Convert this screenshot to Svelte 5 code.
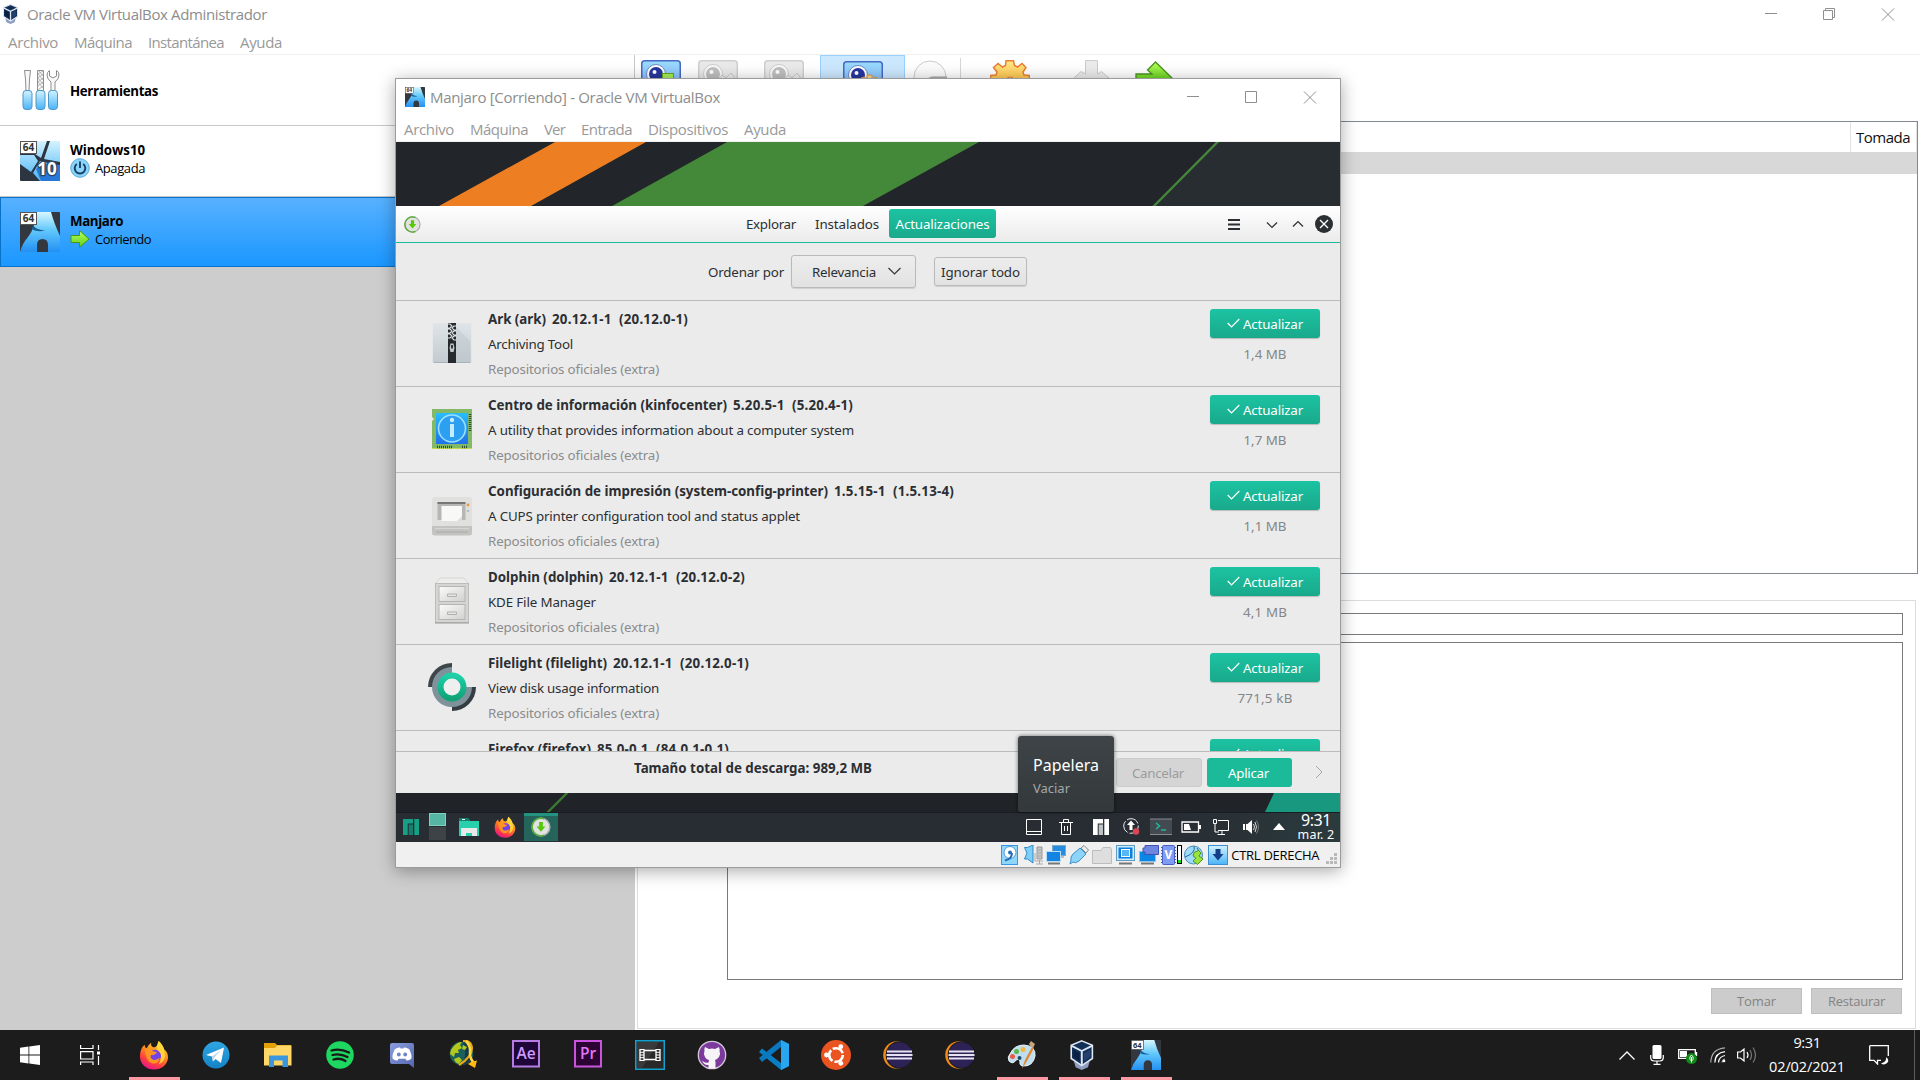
<script>
  // Spreads the letters of a label so that it takes the given width.
  function fit(node, width) {
    const natural = node.getBoundingClientRect().width;
    node.style.letterSpacing = `${(width - natural) / node.textContent.length}px`;
  }

  const mainMenu = [['Archivo', 50, 16], ['Máquina', 58, 16], ['Instantánea', 76, 16], ['Ayuda', 42, 0]];
  const vmMenu = [['Archivo', 50, 16], ['Máquina', 58, 16], ['Ver', 21, 16], ['Entrada', 51, 16], ['Dispositivos', 80, 16], ['Ayuda', 42, 0]];

  const packages = [
    { icon: 'ark', name: 'Ark (ark)', nw: 58, version: '20.12.1-1  (20.12.0-1)', vw: 136, desc: 'Archiving Tool', dw: 85, size: '1,4 MB', sw: 43 },
    { icon: 'info', name: 'Centro de información (kinfocenter)', nw: 239, version: '5.20.5-1  (5.20.4-1)', vw: 120, desc: 'A utility that provides information about a computer system', dw: 366, size: '1,7 MB', sw: 43 },
    { icon: 'printer', name: 'Configuración de impresión (system-config-printer)', nw: 340, version: '1.5.15-1  (1.5.13-4)', vw: 120, desc: 'A CUPS printer configuration tool and status applet', dw: 312, size: '1,1 MB', sw: 43 },
    { icon: 'cabinet', name: 'Dolphin (dolphin)', nw: 115, version: '20.12.1-1  (20.12.0-2)', vw: 136, desc: 'KDE File Manager', dw: 108, size: '4,1 MB', sw: 44 },
    { icon: 'filelight', name: 'Filelight (filelight)', nw: 119, version: '20.12.1-1  (20.12.0-1)', vw: 136, desc: 'View disk usage information', dw: 171, size: '771,5 kB', sw: 55 },
    { icon: 'firefox', name: 'Firefox (firefox)', nw: 103, version: '85.0-0.1  (84.0.1-0.1)', vw: 132, desc: '', dw: 0, size: '', sw: 0 }
  ];

  const apps = [
    { id: 'firefox', open: true }, { id: 'telegram' }, { id: 'explorer' }, { id: 'spotify' }, { id: 'discord' },
    { id: 'jdownloader' }, { id: 'ae' }, { id: 'pr' }, { id: 'movie' }, { id: 'github' }, { id: 'vscode' },
    { id: 'ubuntu' }, { id: 'eclipse' }, { id: 'eclipse' }, { id: 'paint', open: true }, { id: 'vbox', open: true }, { id: 'arch', open: true }
  ];
</script>

{#snippet archIcon(size)}
  <svg width={size} height={size} viewBox="0 0 40 40">
    <rect width="40" height="40" rx="1" fill="#33373f" />
    <path d="M17 0H31Q34 11 40 24V40H28V33Q28 27 22.500 27Q17 27 17 33V40H0Q2 32 8 25Q12 20 14 13Z" fill="url(#blueA)" />
    <path d="M13 13.500Q17 18 25 18.500Q18 20.500 12 17.500Z" fill="#1b5f96" />
    <rect x="0.500" y="0.500" width="16" height="12" fill="#fff" stroke="#555" />
    <text x="8.500" y="10.300" text-anchor="middle" font-size="10" font-weight="700" fill="#333">64</text>
  </svg>
{/snippet}

{#snippet vboxIcon(size)}
  <svg width={size} height={size} viewBox="2.500 0 34 34">
    <path d="M8 24L17 29L26 24L24 31L17 34L10 31Z" fill="#8c9dbd" />
    <path d="M17 1L29 6V21L17 29L5 21V6Z" fill="#123057" stroke="#dde6f2" stroke-width="1.800" />
    <path d="M5 6.500L17 12.500L29 6.500M17 13V29" stroke="#dde6f2" stroke-width="2.200" fill="none" />
    <path d="M7.500 11L14.500 15V24L7.500 19Z" fill="#0b1f42" />
    <path d="M26.500 11L19.500 15V24L26.500 19Z" fill="#23416f" />
  </svg>
{/snippet}

{#snippet firefoxIcon(size)}
  <svg width={size} height={size} viewBox="0 0 32 32">
    <path d="M21 1C24 4 26 7 27 10Q31 13 31 19C30 27 24 31.500 16 31.500C8 31.500 1 26 1 17Q1 9 6 5Q6 8 8 9Q10 5 13 3Q12 7 16 8Q20 7 21 1Z" fill="url(#fire)" />
    <path d="M21 1C24 4 27 8 27 12Q30 22 21 26Q26 18 20 11Q18 6 21 1Z" fill="#ffdc3e" opacity="0.850" />
    <circle cx="17" cy="17" r="6.500" fill="#7542e5" />
    <path d="M6 9Q11 8 15 12L19 13Q18 16 13 16Q11 19 15 21Q19 22 22 19Q21 26 14 25Q7 23 6 9Z" fill="#ff9520" />
  </svg>
{/snippet}

{#snippet pamacIcon(size)}
  <svg width={size} height={size} viewBox="0 0 18 18">
    <circle cx="9" cy="9" r="8" fill="#e2e3e1" stroke="#aaaeaa" stroke-width="1.300" />
    <path d="M12 1.600A8 8 0 1 0 12 16.400" fill="none" stroke="#59ad3a" stroke-width="1.500" />
    <path d="M7.300 4.500H10.700V8.500H13L9 13.200L5 8.500H7.300Z" fill="#55c80b" />
  </svg>
{/snippet}

{#snippet manjaroMark(color, shade)}
  <svg width="16" height="16" viewBox="0 0 16 16">
    <path d="M0 0H10V4.500H4.700V16H0Z" fill={color} />
    <path d="M5.700 5.500H10V16H5.700Z" fill={shade} />
    <path d="M11.300 0H16V16H11.300Z" fill={color} />
  </svg>
{/snippet}

{#snippet camera(kind)}
  <svg width="40" height="20" viewBox="0 0 40 20">
    <rect x="0.750" y="0.750" width="38.500" height="32" rx="3" fill={kind === 'gray' ? '#eaeaea' : 'url(#cam)'} stroke={kind === 'gray' ? '#cfcfcf' : '#4868c6'} stroke-width="1.500" />
    <circle cx="15" cy="14" r="9.500" fill={kind === 'gray' ? '#fafafa' : '#fff'} stroke={kind === 'gray' ? '#ccc' : '#6e8bc9'} />
    <circle cx="15" cy="14" r="7" fill={kind === 'gray' ? '#c0c0c0' : '#26369e'} />
    <circle cx="13.500" cy="12" r="2" fill="#fff" />
    {#if kind === 'new'}<rect x="21.500" y="13.500" width="11" height="8" fill="#a4ee57" stroke="#65a91c" />{/if}
    {#if kind === 'gear'}<path d="M18 20V17L21 16L24 18V14H29V18L33 16L35 18V20Z" fill="#ffd783" stroke="#d99549" />{/if}
    {#if kind === 'gray'}<path d="M20 20L24 15L28 18L33 13L38 20Z" fill="#eee" stroke="#c9c9c9" />{/if}
  </svg>
{/snippet}

{#snippet check()}
  <svg class="check" width="13" height="11" viewBox="0 0 13 11"><path d="M0.700 5L4.500 9L12.300 1" fill="none" stroke="#fff" stroke-width="1.200" /></svg>
{/snippet}

{#snippet packageIcon(id)}
  <svg width="48" height="48" viewBox="0 0 48 48">
    {#if id === 'ark'}
      <rect x="8" y="4" width="32" height="40" transform="translate(-4.800 0) scale(1.200 1)" fill="url(#steel)" />
      <path d="M28 8L42 22V44H28Z" fill="#bac2c7" opacity="0.400" />
      <path d="M6 43.500H42" stroke="#a8b2b8" />
      <rect x="20" y="4" width="8" height="40" fill="#262a2d" />
      <path d="M20 5H22L24 7L22 9H20M28 7H26L24 9L26 11H28M20 10H22L24 12L22 14H20M28 12H26L24 14L26 16H28M20 15H22L24 17L22 19H20M28 17H26L24 19L26 21H28" stroke="#dfe3e5" stroke-width="1.100" fill="none" />
      <path d="M22.500 24.500H25.500L26.500 29L25.500 33H22.500L21.500 29Z" fill="#c4c9cc" /><rect x="23" y="26" width="2" height="3.500" fill="#33383b" />
    {:else if id === 'info'}
      <path d="M4 4H44V44H4V16L6 14L4 12Z" fill="#82b866" />
      <path d="M4 43.500H44" stroke="#c4d94b" />
      <rect x="8" y="8" width="32" height="31" fill="url(#infoBlue)" />
      <circle cx="24" cy="23.500" r="13.500" fill="#2d9ff1" stroke="#9de0ff" stroke-width="1.600" />
      <path d="M24 19V32" stroke="#c6ecff" stroke-width="4" /><circle cx="24" cy="15" r="2.200" fill="#c6ecff" />
      <path d="M42 9V26M9 42H25M34 42H40" stroke="#30512f" stroke-width="2.500" stroke-dasharray="1 1" />
    {:else if id === 'printer'}
      <rect x="4" y="6" width="40" height="38" rx="3" fill="#e0e0de" />
      <path d="M4 35H44V42Q44 44.500 41 44.500H7Q4 44.500 4 42Z" fill="#c3c3c1" />
      <path d="M8 41H40" stroke="#a8a8a6" /><path d="M7 37.500H41" stroke="#d6d6d4" />
      <path d="M9.500 11H37.500V29H9.500Z" fill="#b6b6b4" />
      <path d="M9.500 12H37.500" stroke="#777" stroke-width="2" />
      <path d="M13.500 15H34V30H13.500Z" fill="#f8f8f7" />
      <path d="M34 25V30H29Z" fill="#dedede" />
      <circle cx="40" cy="14" r="1.400" fill="#f1923c" /><circle cx="40" cy="20" r="1.300" fill="#bbb" />
    {:else if id === 'cabinet'}
      <path d="M12 1H36L41 7H7Z" fill="#ededec" stroke="#d6d6d4" />
      <rect x="7.500" y="6.500" width="33" height="39" fill="#d5d5d3" stroke="#bcbcba" />
      <rect x="11" y="9.500" width="26" height="15" fill="url(#drawer)" stroke="#b5b5b3" />
      <rect x="11" y="27.500" width="26" height="15" fill="url(#drawer)" stroke="#b5b5b3" />
      <path d="M19.500 19.500V17H28.500V19.500ZM19.500 37.500V35H28.500V37.500Z" fill="#e6e6e6" stroke="#b0b0b0" />
      <path d="M7 46H41" stroke="#999" />
    {:else if id === 'filelight'}
      <path d="M24 0V24H0A24 24 0 0 1 24 0Z" fill="#3e464b" />
      <path d="M24 48V24H48A24 24 0 0 1 24 48Z" fill="#353d42" />
      <path d="M24 4A20 20 0 1 0 44 24H24Z" fill="#7f919a" />
      <circle cx="24" cy="24" r="11.500" fill="#efefef" stroke="url(#ring)" stroke-width="6" />
    {/if}
  </svg>
{/snippet}

{#snippet appIcon(id)}
  {#if id === 'firefox'}
    {@render firefoxIcon(30)}
  {:else if id === 'vbox'}
    {@render vboxIcon(30)}
  {:else if id === 'arch'}
    {@render archIcon(30)}
  {:else}
    <svg width="30" height="30" viewBox="0 0 30 30">
      {#if id === 'telegram'}
        <circle cx="15" cy="15" r="13.500" fill="url(#tele)" />
        <path d="M5 15L23 7.500L20 23L14.500 19L12 21.500L11 16.500Z" fill="#fff" /><path d="M11 16.500L20 10L13 18L12 21.500Z" fill="#bdd9e8" />
      {:else if id === 'explorer'}
        <path d="M1 3H12L14 5H28V25H1Z" fill="#e3a008" /><path d="M1 8H12L14 5.500H28.500V25.500H1Z" fill="#ffd668" />
        <path d="M6 15.500H25V27H19.500V20.500H11V27H6Z" fill="#3b97dd" />
      {:else if id === 'spotify'}
        <circle cx="15" cy="15" r="13.800" fill="#1ed760" />
        <path d="M6.500 10.500Q15 8 24 12.500M7.500 15Q15 13 22.500 17M8.500 19.500Q15 17.500 20.500 21" fill="none" stroke="#191919" stroke-width="2.300" stroke-linecap="round" />
      {:else if id === 'discord'}
        <path d="M5 3H25Q27 3 27 5V28L22 24H5Q3 24 3 22V5Q3 3 5 3Z" fill="url(#disc)" />
        <path d="M8 9Q11 7 13 7.500L13.500 8.500H16.500L17 7.500Q19 7 22 9Q25 14 24.500 18.500Q22 21 19.500 20.500L18.500 18.700H11.500L10.500 20.500Q8 21 5.500 18.500Q5 14 8 9Z" fill="#fff" />
        <circle cx="11.800" cy="14.500" r="1.900" fill="#6f82c9" /><circle cx="18.200" cy="14.500" r="1.900" fill="#6f82c9" />
      {:else if id === 'jdownloader'}
        <circle cx="12.500" cy="13.500" r="11.800" fill="#1d5f5c" />
        <path d="M14 3A11 11 0 0 1 10 25Q20 18 14 3Z" fill="#123a4a" />
        <path d="M4 7Q8 2 13 2L11 5L13 8L9 10L10 13L6 13L5 17L1 14Q1 10 4 7ZM14 5L18 7L16 10L13 9ZM5 19L10 17L13 20L10 24Q6 23 5 19Z" fill="#b2c81b" />
        <path d="M14 1Q22 0 23 8Q23 17 10 25" fill="none" stroke="#e8a818" stroke-width="2.200" />
        <path d="M17 1Q22 6 21 13Q21 19 25 23" fill="none" stroke="#ffd63c" stroke-width="2.600" />
        <path d="M19 24L22 22L28 20.500L26 28Z" fill="#ffba12" />
      {:else if id === 'ae' || id === 'pr'}
        <rect x="2" y="1" width="26" height="25.500" fill={id === 'ae' ? '#1e0639' : '#2b0434'} stroke={id === 'ae' ? '#b57ce4' : '#cb54df'} stroke-width="2" />
        <text class="adobe" x="15" y="19" text-anchor="middle" font-size="15.500" fill={id === 'ae' ? '#cf9bff' : '#e477f5'}>{id === 'ae' ? 'Ae' : 'Pr'}</text>
      {:else if id === 'movie'}
        <rect x="0.750" y="0.750" width="28.500" height="28.500" fill="#292929" stroke="#11a1cf" stroke-width="1.500" />
        <path d="M2 2H24L7 28H2Z" fill="#444" opacity="0.650" />
        <path d="M5 9V21M9 9V21M21 9V21M25 9V21M9 10.500H21M9 19.500H21" fill="none" stroke="#fff" stroke-width="1.300" />
        <path d="M5 9.500H9M5 12.300H9M5 15H9M5 17.700H9M5 20.500H9M21 9.500H25M21 12.300H25M21 15H25M21 17.700H25M21 20.500H25" stroke="#fff" />
      {:else if id === 'github'}
        <circle cx="15" cy="15" r="13.700" fill="#7b3a9c" stroke="#d3c8da" stroke-width="1.300" />
        <path d="M8 7L12 9Q15 8 18 9L22 7Q23 10 22.500 11Q24 14 22 17Q20 19.500 18 20L18.500 22V28.500H11.500V25Q7 25.500 5 20.500Q8 23.500 11.500 22.500L12 20Q9 19.500 8 17Q6 14 7.500 11Q7 9 8 7Z" fill="#f7f4f8" />
      {:else if id === 'vscode'}
        <path d="M22 0L30 4V26L22 30L0 12L3 8.500L22 23Z" fill="#087fc4" /><path d="M22 0V7L3 22L0 18Z" fill="#0a77bf" />
        <path d="M22 0L30 4V26L22 30Z" fill="#2aa5ef" />
      {:else if id === 'ubuntu'}
        <circle cx="15" cy="15" r="15" fill="#e95420" /><circle cx="15" cy="15" r="6.800" fill="none" stroke="#fff" stroke-width="2.600" stroke-dasharray="12.200 2.040" />
        <circle cx="5.500" cy="15" r="2.400" fill="#fff" /><circle cx="19.800" cy="6.700" r="2.400" fill="#fff" /><circle cx="19.800" cy="23.300" r="2.400" fill="#fff" />
      {:else if id === 'eclipse'}
        <circle cx="14" cy="15" r="13.800" fill="#ee8b18" /><circle cx="16.500" cy="15" r="13.800" fill="#1b1b1b" /><circle cx="16.500" cy="15" r="12.800" fill="#2c2255" />
        <path d="M4 11.500H29M3.500 15H29.500M4 18.500H29" stroke="#e6e2f1" stroke-width="2" />
      {:else if id === 'paint'}
        <path d="M3 14Q7 5 17 5Q29 6 28 16Q26 27 15 26Q12 25 13 21Q12 18 9 20Q6 25 2 21Q0 17 3 14Z" fill="#bfdff0" stroke="#e8f5fb" />
        <circle cx="5.500" cy="16.500" r="2.500" fill="#e85b47" /><circle cx="9.500" cy="11.500" r="2.500" fill="#59b74b" /><circle cx="16" cy="9.500" r="2.500" fill="#f4b93c" /><circle cx="12.500" cy="18" r="2" fill="#204a64" />
        <path d="M15 29L18 20L25 7L27 8L20 21Z" fill="#e1872c" /><path d="M22 4L24 1L28 4L26 8L24 7Z" fill="#c6a77c" />
      {/if}
    </svg>
  {/if}
{/snippet}

<svg class="defs" width="0" height="0">
  <defs>
    <linearGradient id="blueA" x1="0" y1="0" x2="0" y2="1"><stop offset="0" stop-color="#d8f7ff" /><stop offset="0.450" stop-color="#62c8fb" /><stop offset="1" stop-color="#2390f2" /></linearGradient>
    <linearGradient id="fire" x1="0.800" y1="0" x2="0.300" y2="1"><stop offset="0" stop-color="#ffe33c" /><stop offset="0.450" stop-color="#ff8a1c" /><stop offset="0.750" stop-color="#ff3b45" /><stop offset="1" stop-color="#e5158c" /></linearGradient>
    <linearGradient id="cam" x1="0" y1="0" x2="0" y2="1"><stop offset="0" stop-color="#9bdcff" /><stop offset="1" stop-color="#7cabf5" /></linearGradient>
    <linearGradient id="steel" x1="0" y1="0" x2="0" y2="1"><stop offset="0" stop-color="#dfe5e8" /><stop offset="1" stop-color="#c3cbd0" /></linearGradient>
    <linearGradient id="infoBlue" x1="0" y1="0" x2="0" y2="1"><stop offset="0" stop-color="#29bdfb" /><stop offset="1" stop-color="#1f71e8" /></linearGradient>
    <linearGradient id="drawer" x1="0" y1="0" x2="1" y2="1"><stop offset="0" stop-color="#fbfbfb" /><stop offset="1" stop-color="#d0d0ce" /></linearGradient>
    <linearGradient id="ring" x1="0" y1="0" x2="0" y2="1"><stop offset="0" stop-color="#1ecfa8" /><stop offset="1" stop-color="#10a377" /></linearGradient>
    <linearGradient id="tele" x1="0" y1="0" x2="0" y2="1"><stop offset="0" stop-color="#2fa6e2" /><stop offset="1" stop-color="#1483c5" /></linearGradient>
    <linearGradient id="disc" x1="0" y1="0" x2="1" y2="1"><stop offset="0" stop-color="#8a9ddd" /><stop offset="1" stop-color="#5467ae" /></linearGradient>
    <linearGradient id="sky" x1="0" y1="0" x2="0" y2="1"><stop offset="0" stop-color="#d3f3ff" /><stop offset="1" stop-color="#4ab4f8" /></linearGradient>
    <linearGradient id="lime" x1="0" y1="0" x2="0" y2="1"><stop offset="0" stop-color="#b5ff5c" /><stop offset="1" stop-color="#5fce17" /></linearGradient>
    <linearGradient id="gold" x1="0" y1="0" x2="0" y2="1"><stop offset="0" stop-color="#ffe88a" /><stop offset="1" stop-color="#ffc34a" /></linearGradient>
  </defs>
</svg>

<div class="screen">
  <main class="manager">
    <header class="title main-title">
      <span class="title-icon">{@render vboxIcon(20)}</span>
      <span class="ui" use:fit={240}>Oracle VM VirtualBox Administrador</span>
      <svg class="controls" width="130" height="14" viewBox="0 0 130 14" fill="none" stroke="#8f8f8f">
        <path d="M0 6.500H12M58.500 3.500H67.500V12.500H58.500ZM60.500 3.500V1.500H69.500V10.500H67.500M117 1.500L129 13.500M129 1.500L117 13.500" />
      </svg>
    </header>
    <nav class="menu main-menu">
      {#each mainMenu as [label, width, gap]}
        <span class="ui" style:margin-right="{gap}px" use:fit={width}>{label}</span>
      {/each}
    </nav>

    <div class="body">
      <aside class="sidebar">
        <div class="machine tools">
          <svg width="40" height="40" viewBox="-1 0 40 40" fill="#f8f8f8" stroke="#8d8d8d">
            <path d="M3.500 0.500H9.500L8.500 9L8 21H5L4.500 9ZM16.500 0.500H22.500V21H16.500ZM30 21V12Q26 9 26 5Q26 2 28.500 0.500V6L32 8L35.500 6V0.500Q38 2 38 5Q38 9 34 12V21Z" />
            <path d="M17 4L22 1M17 8L22 4M17 12L22 8M17 16L22 12M17 20L22 16M18 1L22 6M17 4L22 10M17 8L22 14M17 12L22 18" stroke="#b5b5b5" />
            <g fill="url(#sky)" stroke="#4f96c8"><rect x="2" y="20.500" width="9" height="19" rx="3" /><rect x="15" y="20.500" width="9" height="19" rx="3" /><rect x="27.500" y="20.500" width="9" height="19" rx="3" /></g>
          </svg>
          <b class="ui" use:fit={88}>Herramientas</b>
        </div>
        <div class="machine">
          <svg width="40" height="40" viewBox="0 0 40 40">
            <rect width="40" height="40" rx="1" fill="#2d3540" />
            <path d="M17 0H27L21 17L15 13H17ZM30 0H40V21L24 18ZM0 14H14L18 20L11 31L0 23ZM20 20L40 25V40H20L13 32Z" fill="url(#sky)" />
            <path d="M16 28L22 22L40 24V40H21Z" fill="#2878d8" />
            <rect x="0.500" y="0.500" width="16" height="12" fill="#fff" stroke="#555" />
            <text x="8.500" y="10.300" text-anchor="middle" font-size="10" font-weight="700" fill="#333">64</text>
            <text class="ten" x="27" y="34" text-anchor="middle" font-size="17" font-weight="700">10</text>
          </svg>
          <div class="labels">
            <b class="ui" use:fit={75}>Windows10</b>
            <div class="state">
              <svg width="20" height="20" viewBox="0 0 20 20"><circle cx="10" cy="10" r="9.300" fill="#8ad4fa" stroke="#5aabdb" /><path d="M6.800 6A5.300 5.300 0 1 0 13.200 6M10 3.500V10" stroke="#173f66" stroke-width="1.900" fill="none" /></svg>
              <span class="ui" use:fit={50}>Apagada</span>
            </div>
          </div>
        </div>
        <div class="machine selected">
          {@render archIcon(40)}
          <div class="labels">
            <b class="ui" use:fit={53}>Manjaro</b>
            <div class="state">
              <svg width="20" height="20" viewBox="0 0 20 20"><path d="M1 6.500H9.500V1.500L19 10L9.500 18.500V13.500H1Z" fill="url(#lime)" stroke="#4c9614" /></svg>
              <span class="ui" use:fit={56}>Corriendo</span>
            </div>
          </div>
        </div>
      </aside>

      <section class="content">
        <div class="toolbar">
          <span class="tool t1">{@render camera('new')}</span>
          <span class="tool t2">{@render camera('gray')}</span>
          <span class="tool t3">{@render camera('gray')}</span>
          <span class="tool chosen">{@render camera('gear')}</span>
          <svg class="tool t5" width="36" height="20" viewBox="0 0 36 20"><circle cx="17" cy="17" r="16" fill="#fbfbfb" stroke="#ccc" /><path d="M15 18L19 16.500H34V20H15Z" fill="#aaa" /></svg>
          <i class="bar"></i>
          <svg class="tool t6" width="40" height="20" viewBox="0 0 40 20"><path d="M0.500 20V15.500L6 15L7 12L3.500 7.500L8 3.500L12.500 7L15.500 5.500L16 0.700H23.500L24.500 5.500L27.500 7L32 3.500L36 7.500L33 12L34 15L39.500 15.500V20Z" fill="url(#gold)" stroke="#e87f33" stroke-width="1.500" /><circle cx="20" cy="21" r="4" fill="#fff" stroke="#d87937" /></svg>
          <svg class="tool t7" width="38" height="20" viewBox="0 0 38 20"><path d="M12.500 0.500H24.500V14L28.500 11.500L36 18V20H1V18L8 11.500L12.500 14Z" fill="#ebebeb" stroke="#ccc" /></svg>
          <svg class="tool t8" width="40" height="20" viewBox="0 0 40 20"><path d="M1 20V13H17L12.500 9L20.500 1L40 20Z" fill="url(#lime)" stroke="#4b9321" stroke-width="1.300" /></svg>
        </div>
        <div class="table">
          <div class="thead"><div class="column"><span class="ui" use:fit={54}>Tomada</span></div></div>
          <div class="trow"></div>
        </div>
        <div class="details">
          <div class="input"></div>
          <div class="area"></div>
          <div class="actions">
            <button><span class="ui" use:fit={39}>Tomar</span></button>
            <button><span class="ui" use:fit={57}>Restaurar</span></button>
          </div>
        </div>
      </section>
    </div>
  </main>

  <section class="vm">
    <header class="title vm-title">
      <span class="title-icon">{@render archIcon(20)}</span>
      <span class="ui" use:fit={290}>Manjaro [Corriendo] - Oracle VM VirtualBox</span>
      <svg class="controls" width="130" height="14" viewBox="0 0 130 14" fill="none" stroke="#8f8f8f"><path d="M0 6.500H12M58.500 1.500H69.500V12.500H58.500ZM117 1.500L129 13.500M129 1.500L117 13.500" /></svg>
    </header>
    <nav class="menu vm-menu">
      {#each vmMenu as [label, width, gap]}
        <span class="ui" style:margin-right="{gap}px" use:fit={width}>{label}</span>
      {/each}
    </nav>

    <svg class="wall" width="944" height="64" viewBox="0 0 944 64">
      <rect width="944" height="64" fill="#222529" />
      <path d="M159 0H250L135 64H43Z" fill="#ee7e22" />
      <path d="M331 0H583L467 64H216Z" fill="#44883a" />
      <path d="M822 0H944V64H758Z" fill="#282d31" />
      <path d="M822.500 -1L757 65" stroke="#44883a" stroke-width="2.300" />
    </svg>

    <div class="pamac">
      <div class="head">
        <span class="head-left">{@render pamacIcon(17)}</span>
        <span class="tab" use:fit={50}>Explorar</span>
        <span class="tab" use:fit={64}>Instalados</span>
        <span class="tab current"><span use:fit={94}>Actualizaciones</span></span>
        <svg class="head-right" width="112" height="20" viewBox="0 0 112 20" fill="none" stroke="#2b2e32">
          <path d="M0 6H12M0 10.500H12M0 15H12" stroke-width="2" />
          <path d="M39 8.500L44 13.500L49 8.500M65 12.500L70 7.500L75 12.500" stroke-width="1.200" />
          <circle cx="96" cy="10" r="9" fill="#2b2f33" stroke="none" /><path d="M92 6L100 14M100 6L92 14" stroke="#fff" stroke-width="1.300" />
        </svg>
      </div>
      <div class="sort">
        <span use:fit={76}>Ordenar por</span>
        <button class="select"><span use:fit={64}>Relevancia</span><svg width="13" height="9" viewBox="0 0 13 9"><path d="M0.500 1L6.500 7L12.500 1" fill="none" stroke="#33383c" stroke-width="1.200" /></svg></button>
        <button class="ignore"><span use:fit={79}>Ignorar todo</span></button>
      </div>
      <div class="list">
        {#each packages as p}
          <article class="pkg">
            <div class="pic">{@render packageIcon(p.icon)}</div>
            <div class="info">
              <div class="name"><b use:fit={p.nw}>{p.name}</b><b use:fit={p.vw}>{p.version}</b></div>
              {#if p.desc}
                <div><span use:fit={p.dw}>{p.desc}</span></div>
                <div class="repo"><span use:fit={171}>Repositorios oficiales (extra)</span></div>
              {/if}
            </div>
            <div class="update">
              <button class="go">{@render check()}<span use:fit={60}>Actualizar</span></button>
              {#if p.size}<span class="size"><span use:fit={p.sw}>{p.size}</span></span>{/if}
            </div>
          </article>
        {/each}
      </div>
      <footer class="foot">
        <b use:fit={238}>Tamaño total de descarga: 989,2 MB</b>
        <button class="cancel"><span use:fit={52}>Cancelar</span></button>
        <button class="apply"><span use:fit={41}>Aplicar</span></button>
        <svg width="8" height="14" viewBox="0 0 8 14"><path d="M1 1L7 7L1 13" fill="none" stroke="#a6a6a6" /></svg>
      </footer>
    </div>

    <svg class="wall" width="944" height="19" viewBox="0 0 944 19">
      <rect width="944" height="19" fill="#202428" />
      <path d="M172 -1L151 20" stroke="#3d7a34" stroke-width="2.300" />
      <path d="M878 0H944V19H869Z" fill="#17987f" />
    </svg>

    <div class="panel">
      <span>{@render manjaroMark('#16a085', '#137f6c')}</span>
      <span class="pager"><i></i><i></i></span>
      <span><svg width="20" height="20" viewBox="0 0 20 20"><path d="M0 1H9L11 4H20V19H0Z" fill="#28cfab" /><path d="M0 1H9L11 4H0Z" fill="#137e6b" /><path d="M3 2.500H6" stroke="#fff" /><path d="M2 11H18V19H13V16H7V19H2Z" fill="#e8e9e8" /></svg></span>
      <span>{@render firefoxIcon(22)}</span>
      <span class="running">{@render pamacIcon(20)}</span>
      <span></span>
      <span><svg width="16" height="16" viewBox="0 0 16 16" fill="none" stroke="#fff"><path d="M0.500 0.500H15.500V15.500H0.500ZM0.500 12.500H15.500" /></svg></span>
      <span><svg width="14" height="16" viewBox="0 0 14 16" fill="none" stroke="#fff"><path d="M0 3.500H14M4.500 3V0.500H9.500V3M2.500 4V15.500H11.500V4M5.500 7V12M8.500 7V12" /></svg></span>
      <span>{@render manjaroMark('#fff', '#bfc2c5')}</span>
      <span><svg width="17" height="17" viewBox="0 0 17 17"><circle cx="8" cy="8" r="7.300" fill="none" stroke="#e9eaeb" stroke-dasharray="13 2" /><path d="M8 2.500L12 7H9.500V12H6.500V7H4Z" fill="#fff" /><circle cx="13" cy="13.500" r="3.200" fill="#da4453" /></svg></span>
      <span><svg width="22" height="18" viewBox="0 0 22 18"><rect y="1" width="22" height="15" fill="#444b50" /><path d="M0 1H22M0 16.500H22" stroke="#868b8f" /><path d="M6 5L9.500 8L6 11M11 12H16" fill="none" stroke="#1cbb9b" stroke-width="1.500" /></svg></span>
      <span><svg width="20" height="12" viewBox="0 0 20 12"><path d="M1 1H17.500V11H1Z" fill="none" stroke="#fff" stroke-width="1.300" /><path d="M3 3H8L10 9H3ZM18 4H20V8H18Z" fill="#fff" /></svg></span>
      <span><svg width="16" height="16" viewBox="0 0 16 16" fill="none" stroke="#fff"><path d="M5 1.500H15.500V11.500H5M9 12V15M4.500 15.500H12M0.500 0.500H3.500V4.500H0.500ZM2 4.500V8M2 8V13H6" /></svg></span>
      <span><svg width="17" height="16" viewBox="0 0 17 16"><path d="M0 5H2V11H0ZM3 5H4.500L9 1V15L4.500 11H3Z" fill="#fff" /><path d="M10.500 5Q12.500 8 10.500 11M12 3Q15 8 12 13" fill="none" stroke="#d7d8d9" /><path d="M13.500 1.500Q17.500 8 13.500 14.500" fill="none" stroke="#777b7e" /></svg></span>
      <span><svg width="12" height="7" viewBox="0 0 12 7"><path d="M6 0L12 7H0Z" fill="#fff" /></svg></span>
      <span class="clock"><span class="hour" use:fit={30}>9:31</span><span class="day" use:fit={37}>mar. 2</span></span>
    </div>

    <div class="status">
      <span><svg width="17" height="20" viewBox="0 0 17 20"><rect x="0.500" y="0.500" width="16" height="19" fill="#8fd6fb" stroke="#3a97e8" /><circle cx="9" cy="7.500" r="6" fill="#fff" stroke="#4d9bd0" /><circle cx="9" cy="7.500" r="2" fill="#256fb8" /><path d="M11 8Q11 14 4 15.500" stroke="#256fb8" stroke-width="2" fill="none" /></svg></span>
      <span class="audio"><svg width="20" height="20" viewBox="0 0 20 20"><path d="M0.500 2.500H3.500L9 0V18L3.500 14H0.500L3 8Z" fill="#7fcef8" stroke="#2d8bc6" /><path d="M13 2H18V14H13Z" fill="#c5c5c5" stroke="#999" /><path d="M11 8V16H19M15.500 15V19M12 19H19M13 5H18M13 8H18M13 11H18" fill="none" stroke="#aaa" /></svg></span>
      <span><svg width="20" height="20" viewBox="0 0 20 20"><rect x="6.500" y="0.500" width="13" height="10" fill="#258ddf" stroke="#7aaac8" /><path d="M10 12H18" stroke="#888" /><rect x="0.500" y="6.500" width="14" height="10" fill="#1484e2" stroke="#b8dff5" /><path d="M2 18.500H14" stroke="#777" stroke-width="2" /></svg></span>
      <span><svg width="20" height="20" viewBox="0 0 20 20"><path d="M12 3L15 0.500L19.500 5L17 8Z" fill="#eee" stroke="#888" /><path d="M11 3L17 9L10 16Q6 19 4 17L1 19L2 15Q1 12 4 9Z" fill="#8cd4fa" stroke="#3d91c9" /></svg></span>
      <span><svg width="20" height="18" viewBox="0 0 20 18"><path d="M0.500 17.500V4.500H9L11 1.500H18.500L19.500 4V17.500Z" fill="#dedede" stroke="#bdbdbd" /></svg></span>
      <span><svg width="20" height="20" viewBox="0 0 20 20"><rect x="0.500" y="0.500" width="18" height="15" fill="#c9ecff" stroke="#5d9bc2" /><rect x="2.500" y="2.500" width="14" height="11" fill="#0c7fe0" /><rect x="5.500" y="4.500" width="8" height="7" fill="#54b8fa" stroke="#fff" /><path d="M3 18.500H16" stroke="#777" stroke-width="2" /></svg></span>
      <span><svg width="20" height="20" viewBox="0 0 20 20"><rect x="0.500" y="6.500" width="16" height="10" fill="#0c86e4" stroke="#8cc6ec" /><path d="M2 18.500H15" stroke="#777" stroke-width="2" /><path d="M4 3H6V0.500H19.500V9.500H6V7H4Z" fill="#6e86e0" stroke="#4152b4" /></svg></span>
      <span class="cpu"><svg width="15" height="20" viewBox="0 0 15 20"><path d="M0 2.500H15M0 5.500H15M0 8.500H15M0 11.500H15M0 14.500H15M0 17.500H15" stroke="#4860bd" /><rect x="1.500" y="0.500" width="12" height="19" rx="1" fill="#7f9cf2" stroke="#4660c8" /><text x="7.500" y="14" text-anchor="middle" font-size="12" font-weight="700" fill="#fff">V</text></svg></span>
      <span class="meter"></span>
      <span class="mouse"><svg width="20" height="20" viewBox="0 0 20 20"><circle cx="9.500" cy="10" r="9" fill="#9cdbfb" stroke="#4b8fb5" /><path d="M10 1Q12 8 1 12M13 3L15 6" stroke="#28688f" fill="none" /><path d="M10 7.500L14.500 5.500L17 8L15 11L19 14L13.500 19.500L9 16L12 13L9 11Z" fill="#9be23f" stroke="#4d951e" /></svg></span>
      <span class="host"><svg width="20" height="20" viewBox="0 0 20 20"><rect x="0.500" y="0.500" width="19" height="19" fill="url(#sky)" stroke="#3c8fd0" /><path d="M7.500 4H12.500V9H15.500L10 15.500L4.500 9H7.500Z" fill="#123f86" /></svg></span>
      <span class="key"><span class="ui" use:fit={88}>CTRL DERECHA</span></span>
      <svg class="grip" width="11" height="11" viewBox="0 0 11 11" fill="#b9b9b9"><path d="M8 0H11V3H8ZM4 4H7V7H4ZM8 4H11V7H8ZM0 8H3V11H0ZM4 8H7V11H4ZM8 8H11V11H8Z" /></svg>
    </div>
  </section>

  <div class="tip"><span class="tip-name" use:fit={66}>Papelera</span><span class="tip-sub" use:fit={37}>Vaciar</span></div>

  <footer class="taskbar">
    <div class="start"><svg width="20" height="20" viewBox="0 0 20 20" fill="#fff"><path d="M0 2.800L8.500 1.600V9.500H0ZM9.300 1.500L20 0V9.500H9.300ZM0 10.400H8.500V18.400L0 17.200ZM9.300 10.400H20V20L9.300 18.500Z" /></svg></div>
    <div class="start"><svg width="20" height="20" viewBox="0 0 20 20" fill="none" stroke="#fff" stroke-width="1.200"><path d="M0.600 0V3.500H13V0M0.600 6.600H13V14H0.600ZM0.600 20V17H13V20M18.500 0V5M18.500 11V20" /><path d="M17 6.500H20V9.500H17Z" fill="#fff" stroke="none" /></svg></div>
    <div class="apps">
      {#each apps as app}
        <div class="app" class:open={app.open}>{@render appIcon(app.id)}</div>
      {/each}
    </div>
    <div class="tray">
      <span><svg width="16" height="9" viewBox="0 0 16 9"><path d="M0.500 8.500L8 1L15.500 8.500" fill="none" stroke="#fff" stroke-width="1.300" /></svg></span>
      <span><svg width="14" height="20" viewBox="0 0 14 20"><rect x="2.500" y="0" width="9" height="14" rx="1.500" fill="#fff" /><path d="M0.700 10V13Q1 16 4 16H10Q13 16 13.300 13V10M7 16V19M3.500 19.400H10.500" stroke="#fff" fill="none" stroke-width="1.200" /></svg></span>
      <span><svg width="20" height="18" viewBox="0 0 20 18"><path d="M0.700 3.700H17.300V12.300H0.700ZM18.500 6V10" stroke="#fff" stroke-width="1.300" fill="none" /><path d="M2 5H9V11H2Z" fill="#fff" /><circle cx="13.500" cy="12.500" r="5.500" fill="#0f8a16" /><path d="M13.500 9Q17 12.500 13.500 15Q10 12.500 13.500 9M13.500 11V16.500" stroke="#fff" fill="none" /></svg></span>
      <span><svg width="16" height="16" viewBox="0 0 16 16" fill="none" stroke="#fff" stroke-width="1.200"><path d="M8.500 15.500Q9 9.500 15 8.500M4.800 15.500Q5 6 15 4.700" /><path d="M0.800 15.500Q1 2 15 0.800M12 15.500Q12.500 12.500 15 12" stroke="#aaa" /><circle cx="14" cy="14" r="1.300" fill="#fff" stroke="none" /></svg></span>
      <span><svg width="20" height="18" viewBox="0 0 20 18" fill="none" stroke="#fff" stroke-width="1.200"><path d="M0.600 6H3.500L7 3V15L3.500 12H0.600ZM10 6Q12 9 10 12" /><path d="M13 4Q16 9 13 14M16 1.500Q21 9 16 16.500" stroke="#777" /></svg></span>
      <span class="datetime"><span class="ui" use:fit={27}>9:31</span><span class="ui" use:fit={76}>02/02/2021</span></span>
      <span><svg width="20" height="20" viewBox="0 0 20 20"><path d="M0.700 0.700H19.300V11M12 15.300H8.500L8.500 19L5 15.300H0.700V0.700" fill="none" stroke="#fff" stroke-width="1.300" /><path d="M17 12Q18 17 12 18.500Q16 21 19 17Q20 14 17 12" fill="#fff" /></svg></span>
      <span class="peek"></span>
    </div>
  </footer>
</div>

<style>
  :global(body) { margin: 0; overflow: hidden; }
  * { box-sizing: border-box; }
  svg { display: block; flex: none; }
  .defs { position: absolute; }
  button { padding: 0; margin: 0; font: inherit; color: inherit; border: 0; display: flex; align-items: center; justify-content: center; }
  span, b { white-space: pre; }
  .screen { position: relative; width: 1920px; height: 1080px; overflow: hidden; font-family: "Noto Sans", sans-serif; background: #fff; }
  .ui { font-family: "Open Sans", "Noto Sans", sans-serif; }
  .manager { height: 1030px; display: flex; flex-direction: column; background: #fff; }

  .title { display: flex; align-items: center; font-size: 15px; color: #8d8d8d; }
  .main-title { height: 29px; padding: 0 25px 1px 2px; }
  .main-title .title-icon { margin-right: 5px; }
  .title-icon { margin-right: 6px; }
  .controls { margin-left: auto; }
  .menu { display: flex; align-items: center; font-size: 15px; color: #999; }
  .main-menu { height: 26px; padding: 1px 8px 0; border-bottom: 1px solid #f0f0f0; }

  .body { flex: 1; display: flex; min-height: 0; }
  .sidebar { width: 635px; background: #cdcdcd; }
  .machine { height: 71px; background: #fff; border-bottom: 1px solid #c8c8c8; padding: 15px 0 0 20px; display: flex; gap: 10px; font-size: 13.3px; color: #000; }
  .tools { align-items: flex-start; line-height: 42px; }
  .labels { display: flex; flex-direction: column; line-height: 18px; align-items: flex-start; }
  .state { display: flex; align-items: center; gap: 5px; height: 18px; font-size: 13px; }
  .selected { height: 70px; border: 1px solid #0872c8; background: linear-gradient(#58b1ff, #1a97ff); padding: 14px 0 0 19px; }
  .ten { fill: #fff; stroke: #24486c; stroke-width: 2.5px; paint-order: stroke; }
  .adobe { font-family: "Open Sans", sans-serif; font-weight: 600; }

  .content { flex: 1; display: flex; flex-direction: column; min-width: 0; background: #fff; }
  .toolbar { height: 66px; border-left: 1px solid #c8c8c8; margin-left: -1px; display: flex; align-items: flex-start; }
  .tool { margin-top: 5px; }
  .t1 { margin-left: 6px; }
  .t2 { margin-left: 17px; }
  .t3 { margin-left: 26px; }
  .chosen { width: 85px; height: 60px; margin: 0 8px 0 16px; padding: 5px 0 0 22px; background: #cce8ff; border: 1px solid #99d1ff; }
  .bar { width: 1px; height: 60px; margin: 3px 29px 0 11px; background: #d6d6d6; }
  .t7 { margin-left: 43px; }
  .t8 { margin-left: 24px; margin-top: 6px; }
  .table { height: 453px; margin: 0 2px 0 3px; border: 1px solid #828790; }
  .thead { height: 30px; display: flex; justify-content: flex-end; }
  .column { width: 67px; padding-left: 5px; border-left: 1px solid #e2e2e2; border-right: 1px solid #e2e2e2; font-size: 15px; line-height: 30px; color: #111; }
  .trow { height: 22px; background: #d8d8d8; }
  .details { width: 1279px; height: 429px; margin: 26px 0 0 2px; border: 1px solid #dcdcdc; padding: 12px 12px 0 89px; }
  .input { height: 22px; border: 1px solid #7a7a7a; }
  .area { height: 338px; margin-top: 7px; border: 1px solid #7a7a7a; }
  .actions { display: flex; justify-content: flex-end; gap: 9px; margin: 8px 1px 0 0; }
  .actions button { width: 91px; height: 26px; background: #ccc; border: 1px solid #bfbfbf; color: #838383; font-size: 13px; }

  .vm { position: absolute; left: 395px; top: 78px; width: 946px; height: 790px; border: 1px solid #9b9b9b; background: #fff; box-shadow: 0 3px 16px rgba(0, 0, 0, 0.34); }
  .vm-title { height: 38px; padding: 0 23px 2px 9px; }
  .vm-title .title-icon { margin-right: 5px; }
  .vm-menu { height: 25px; padding: 0 8px; border-bottom: 1px solid #f0f0f0; }

  .pamac { height: 587px; background: #ebebeb; color: #2b2f33; font-size: 13.33px; border-radius: 3px 3px 0 0; }
  .head { height: 37px; border-bottom: 1px solid #1cb99a; background: linear-gradient(#fff, #ebebeb); display: flex; align-items: center; border-radius: 3px 3px 0 0; }
  .head-left { width: 350px; padding-left: 8px; }
  .tab { margin-right: 19px; }
  .current { width: 107px; height: 29px; margin: 0 0 1px -9px; border-radius: 3px; background: linear-gradient(#1cc3a2, #19a98b); color: #fff; display: flex; align-items: center; justify-content: center; }
  .head-right { margin-left: auto; }
  .sort { height: 58px; border-bottom: 1px solid #bbb; display: flex; align-items: center; padding-left: 312px; }
  .select, .ignore { border: 1px solid #bababa; border-radius: 3px; background: linear-gradient(#ededed, #e2e2e2); box-shadow: 0 1px 1px #d0d0d0; color: #2b2f33; }
  .select { width: 125px; height: 33px; margin: 0 18px 0 7px; justify-content: space-between; padding: 0 14px 0 20px; }
  .ignore { width: 93px; height: 29px; }
  .list { height: 450px; overflow: hidden; }
  .pkg { height: 86px; border-bottom: 1px solid #bbb; display: flex; }
  .pic { width: 92px; padding: 18px 0 0 32px; }
  .info { flex: 1; padding-top: 6px; line-height: 25px; }
  .name { display: flex; gap: 6px; }
  .repo { color: #8b8c8d; }
  .update { width: 130px; padding-top: 8px; display: flex; flex-direction: column; }
  .go { width: 110px; height: 29px; border-radius: 3px; background: linear-gradient(#1cc3a2, #19a98b); color: #fff; box-shadow: 0 1px 1px #bbb; gap: 3px; }
  .size { width: 110px; text-align: center; line-height: 32px; color: #858687; }
  .foot { height: 42px; border-top: 1px solid #bbb; display: flex; align-items: flex-start; padding: 6px 17px 0 238px; }
  .foot b { line-height: 20px; margin-right: auto; }
  .cancel { width: 86px; height: 29px; border-radius: 3px; background: #d5d5d5; border: 1px solid #cbcbcb; color: #9b9b9b; margin-right: 5px; padding-right: 2px; }
  .apply { width: 85px; height: 29px; border-radius: 3px; background: #1bbb9a; color: #fff; padding-right: 2px; }
  .foot svg { margin: 7px 0 0 23px; }

  .panel { height: 30px; background: linear-gradient(90deg, #282d34 0 82%, #293237 90%, #2a3b3e); box-shadow: inset 0 1px #191d22; padding: 0 4px 1px 0; display: grid; grid-template-columns: 30px 23px 40px 32px 40px 1fr 32px 32px 38px 22px 38px 22px 38px 22px 34px 40px; }
  .panel > span { display: flex; align-items: center; justify-content: center; }
  .panel .pager { flex-direction: column; gap: 1px; }
  .pager i { width: 17px; height: 13px; background: #3e4347; }
  .pager i:first-child { background: #57b5a3; border: 1px solid #7fd1c2; }
  .panel .running { margin: 1px 3px 0; padding-bottom: 3px; background: #24645b; border-top: 3px solid #22937f; }
  .panel .clock { flex-direction: column; color: #fff; }
  .hour { font-size: 16px; line-height: 16px; }
  .day { font-size: 12.5px; line-height: 13px; }

  .status { height: 25px; background: #f0f0f0; display: flex; align-items: center; padding-left: 602px; }
  .status > span { width: 23.2px; display: flex; justify-content: center; flex: none; }
  .status > .audio { justify-content: flex-end; }
  .status > .cpu { width: 17px; }
  .status > .meter { width: 5px; height: 19px; border: 1px solid #000; background: linear-gradient(#fff 80%, #1ddb1d 80%); }
  .status > .mouse { width: 24px; }
  .status > .host { width: 24px; }
  .status > .key { width: 90px; justify-content: flex-start; padding-left: 1px; font-size: 13px; color: #000; }
  .grip { margin: 7px 0 0 6px; }

  .tip { position: absolute; left: 1018px; top: 736px; width: 96px; height: 76px; border-radius: 3px; background: linear-gradient(#3e4447, #33383b); box-shadow: 0 0 4px rgba(0, 0, 0, 0.55); color: #fff; padding: 17px 0 0 15px; display: flex; flex-direction: column; align-items: flex-start; }
  .tip-name { font-size: 16px; line-height: 24px; }
  .tip-sub { font-size: 13px; line-height: 22px; color: #a5a8aa; }

  .taskbar { height: 50px; background: #1c1c1c; display: flex; }
  .start { width: 60px; display: flex; align-items: center; justify-content: center; }
  .apps { display: flex; margin-left: 3px; }
  .app { width: 62px; display: flex; align-items: center; justify-content: center; background: linear-gradient(transparent, transparent) center bottom / 51px 3px no-repeat; }
  .open { background-image: linear-gradient(#ff98a2, #ff98a2); }
  .tray { margin-left: auto; width: 308px; display: grid; grid-template-columns: 30px 30px 31px 29px 30px 90px 54px 14px; color: #fff; }
  .tray > span { display: flex; align-items: center; justify-content: center; }
  .tray .datetime { flex-direction: column; font-size: 14.5px; line-height: 24px; }
  .tray .peek { margin-left: 8px; border-left: 1px solid #5c5c5c; }
</style>
